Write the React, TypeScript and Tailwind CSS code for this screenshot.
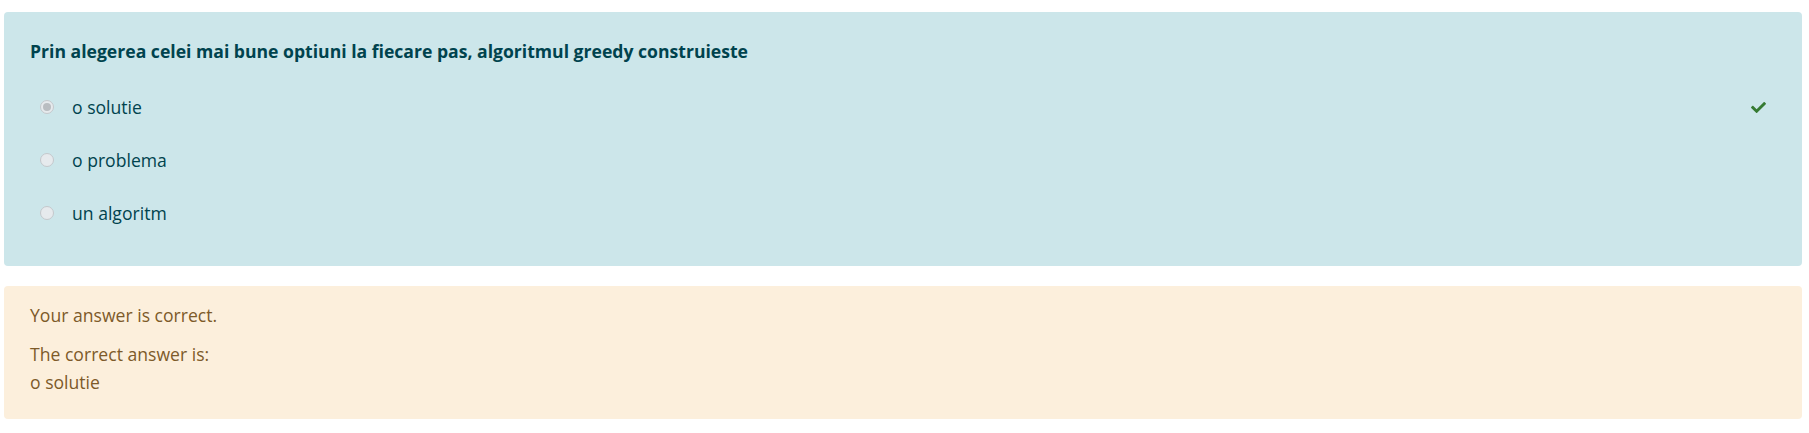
import React from 'react';

const options = [
  { label: 'o solutie', checked: true },
  { label: 'o problema', checked: false },
  { label: 'un algoritm', checked: false },
];

const Radio = ({ checked }: { checked: boolean }) => (
  <span className="ml-[10px] flex h-[14px] w-[14px] shrink-0 items-center justify-center rounded-full border border-[#c4c8cc] bg-[#e6eaed]">
    {checked ? <span className="h-[8px] w-[8px] rounded-full bg-[#b9bdc1]" /> : null}
  </span>
);

const CheckIcon = () => (
  <svg viewBox="0 0 512 512" className="mr-[9px] h-[15px] w-[17px] fill-[#357a32]">
    <path d="M173.898 439.404l-166.4-166.4c-9.997-9.997-9.997-26.206 0-36.204l36.203-36.204c9.997-9.998 26.207-9.998 36.204 0L192 312.69 432.095 72.596c9.997-9.997 26.207-9.997 36.204 0l36.203 36.204c9.997 9.997 9.997 26.206 0 36.204l-294.4 294.401c-9.998 9.997-26.207 9.997-36.204-.001z" />
  </svg>
);

const App = () => {
  return (
    <div className="min-h-[433px] bg-white pl-[4px] pr-[7px] pt-[12px] font-['Open_Sans',sans-serif] text-[17.6px]">
      <div className="rounded-[4px] bg-[#cce6ea] px-[26px] pb-[40px] pt-[26px] text-[#00434e]">
        <div className="h-[26px] font-bold leading-[26px]">
          Prin alegerea celei mai bune optiuni la fiecare pas, algoritmul greedy construieste
        </div>
        <div className="mt-[30px] flex flex-col gap-[27px]">
          {options.map((o) => (
            <div key={o.label} className="flex h-[26px] items-center leading-[26px]">
              <Radio checked={o.checked} />
              <span className="ml-[18px]">{o.label}</span>
              {o.checked ? (
                <span className="ml-auto flex items-center">
                  <CheckIcon />
                </span>
              ) : null}
            </div>
          ))}
        </div>
      </div>
      <div className="mt-[20px] rounded-[4px] bg-[#fcefdc] px-[26px] pb-[23px] pt-[16px] leading-[26px] text-[#7d5a29]">
        <div>Your answer is correct.</div>
        <div className="mt-[12px] leading-[28px]">
          The correct answer is:
          <br />
          o solutie
        </div>
      </div>
    </div>
  );
};

export default App;
